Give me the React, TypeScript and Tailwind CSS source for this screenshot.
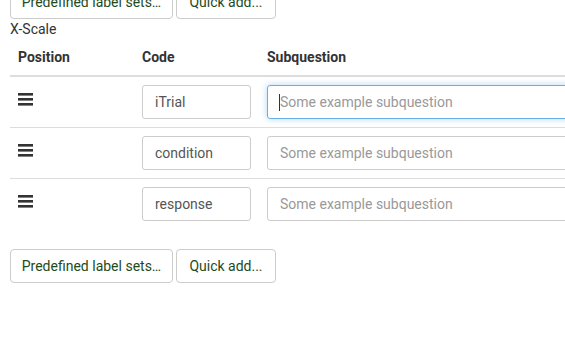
const rows = ["iTrial", "condition", "response"];

const Buttons = () => (
  <div className="flex gap-[3px]">
    <button className="h-[34px] w-[163px] rounded-[4px] border border-[#ccc] bg-white text-[14px] text-[#1e4a1e]">
      Predefined label sets…
    </button>
    <button className="h-[34px] w-[100px] rounded-[4px] border border-[#ccc] bg-white text-[14px] text-[#1e4a1e]">
      Quick add...
    </button>
  </div>
);

const Grip = () => (
  <svg width="16" height="14" viewBox="0 0 16 14" className="text-[#333]">
    <rect x="0" y="1" width="15" height="2.6" fill="currentColor" />
    <rect x="0" y="6" width="15" height="2.6" fill="currentColor" />
    <rect x="0" y="11" width="15" height="2.6" fill="currentColor" />
  </svg>
);

const App = () => (
  <div className="h-[348px] w-[565px] overflow-hidden bg-white font-['Roboto',sans-serif] text-[14px] text-[#333]">
    <div className="-mt-[15px] px-[10px]">
      <Buttons />
      <div className="leading-[20px]">X-Scale</div>
      <table className="w-[600px] border-collapse">
        <thead>
          <tr className="border-b-2 border-[#ddd]">
            <th className="w-[124px] px-2 py-[8px] text-left font-bold leading-[20px]">Position</th>
            <th className="w-[125px] px-2 py-[8px] text-left font-bold leading-[20px]">Code</th>
            <th className="px-2 py-[8px] text-left font-bold leading-[20px]">Subquestion</th>
          </tr>
        </thead>
        <tbody>
          {rows.map((code, i) => (
            <tr key={code} className={i < rows.length - 1 ? "border-b border-[#ddd]" : ""}>
              <td className="h-[51px] px-2 align-top pt-[15px]">
                <Grip />
              </td>
              <td className="px-2 align-middle">
                <input
                  defaultValue={code}
                  className="h-[34px] w-[109px] rounded-[3px] border border-[#ccc] px-3 text-[#555] outline-none"
                />
              </td>
              <td className="px-2 align-middle">
                <div className="relative">
                  <input
                    placeholder="Some example subquestion"
                    className={`h-[34px] w-full rounded-[3px] border px-3 text-[#555] outline-none placeholder:text-[#999] ${
                      i === 0 ? "border-[#66afe9] shadow-[0_0_6px_rgba(102,175,233,0.5)]" : "border-[#ccc]"
                    }`}
                  />
                  {i === 0 && (
                    <span className="absolute left-[12px] top-[9px] h-[17px] w-px bg-[#333]" />
                  )}
                </div>
              </td>
            </tr>
          ))}
        </tbody>
      </table>
      <div className="mt-[20px]">
        <Buttons />
      </div>
    </div>
  </div>
);

export default App;
